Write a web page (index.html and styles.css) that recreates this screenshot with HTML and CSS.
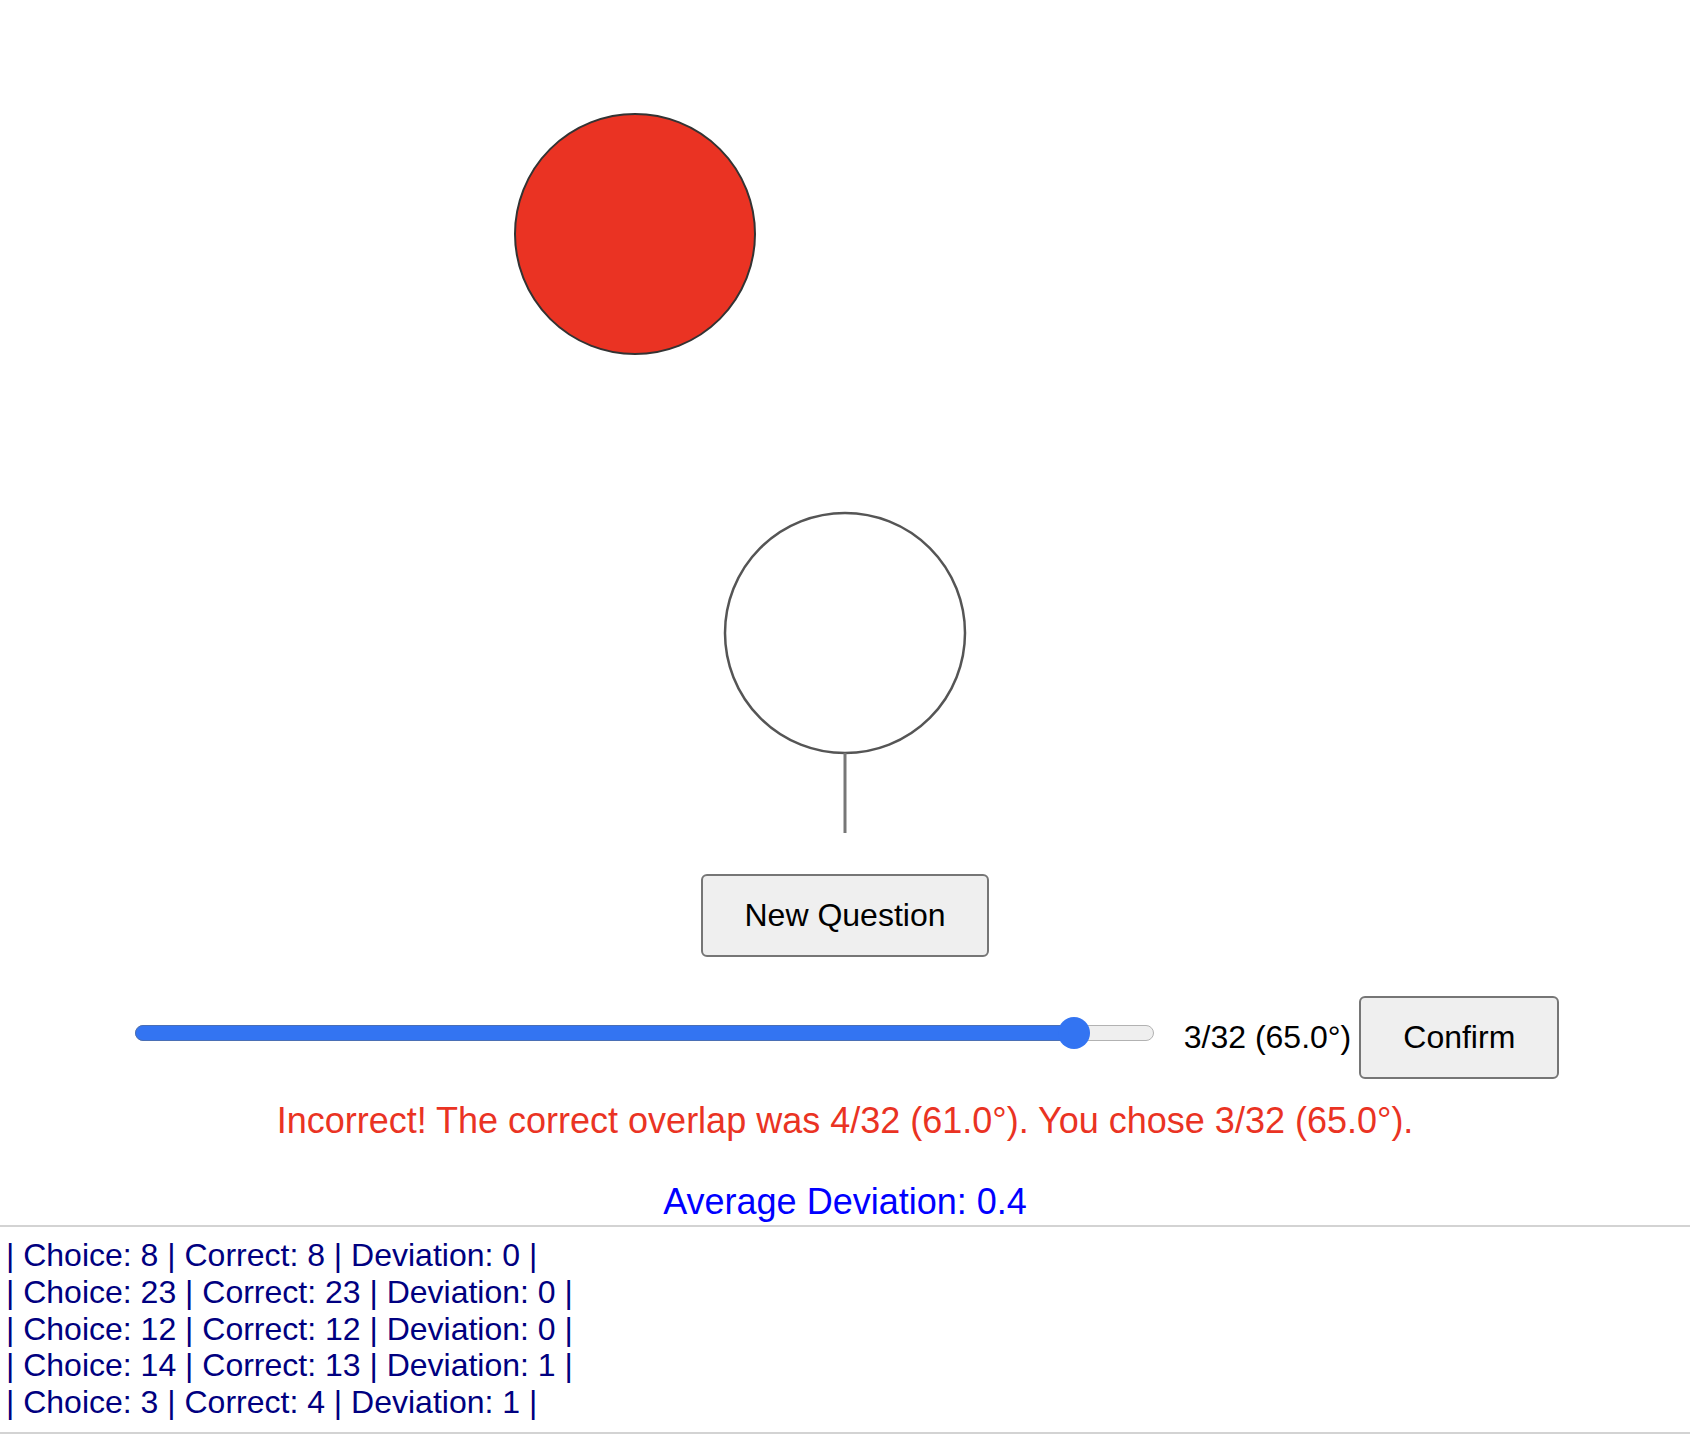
FILE: index.html
```html
<!DOCTYPE html>
<html>
<head>
<meta charset="utf-8">
<link rel="stylesheet" href="styles.css">
</head>
<body>
  <div class="stage">
    <svg class="canvas" width="1690" height="874" viewBox="0 0 1690 874">
      <circle cx="635" cy="234" r="120" fill="#ea3323" stroke="#333333" stroke-width="2"/>
      <circle cx="845" cy="633" r="120" fill="#ffffff" stroke="#555555" stroke-width="2.5"/>
      <line x1="845" y1="753" x2="845" y2="833" stroke="#777777" stroke-width="3"/>
    </svg>
  </div>
  <div class="center-row">
    <button class="btn">New Question</button>
  </div>
  <div class="control-row">
    <div class="slider">
      <div class="track"></div>
      <div class="fill" style="width: 940px;"></div>
      <div class="thumb" style="left: 923px;"></div>
    </div>
    <span class="value">3/32 (65.0°)</span>
    <button class="btn">Confirm</button>
  </div>
  <div class="message">Incorrect! The correct overlap was 4/32 (61.0°). You chose 3/32 (65.0°).</div>
  <div class="average">Average Deviation: 0.4</div>
  <div class="history">
    <div class="entry">| Choice: 8 | Correct: 8 | Deviation: 0 |</div>
    <div class="entry">| Choice: 23 | Correct: 23 | Deviation: 0 |</div>
    <div class="entry">| Choice: 12 | Correct: 12 | Deviation: 0 |</div>
    <div class="entry">| Choice: 14 | Correct: 13 | Deviation: 1 |</div>
    <div class="entry">| Choice: 3 | Correct: 4 | Deviation: 1 |</div>
  </div>
</body>
</html>
```

FILE: styles.css
```css
html, body {
  margin: 0;
  padding: 0;
  background: #ffffff;
}
body {
  font-family: "Liberation Sans", Arial, sans-serif;
  font-size: 32px;
  color: #000000;
  width: 1690px;
}
.stage {
  height: 874px;
}
.canvas {
  display: block;
}
.center-row {
  display: flex;
  justify-content: center;
}
.btn {
  font-family: "Liberation Sans", Arial, sans-serif;
  font-size: 32px;
  line-height: 37px;
  padding: 21px 42px;
  background: #efefef;
  color: #000000;
  border: 2px solid #767676;
  border-radius: 6px;
  margin: 0;
}
.control-row {
  display: flex;
  justify-content: center;
  align-items: center;
  margin-top: 39px;
  padding-left: 4px;
  height: 82px;
}
.slider {
  position: relative;
  width: 1019px;
  height: 32px;
  margin-bottom: 8px;
  margin-right: 30px;
}
.track {
  position: absolute;
  left: 0;
  right: 0;
  top: 8px;
  height: 16px;
  box-sizing: border-box;
  background: #efefef;
  border: 1.5px solid #b2b2b2;
  border-radius: 8px;
}
.fill {
  position: absolute;
  left: 0;
  top: 8px;
  height: 16px;
  box-sizing: border-box;
  background: #3374f2;
  border: 1px solid #4a6fb5;
  border-radius: 8px;
}
.thumb {
  position: absolute;
  top: 0;
  width: 32px;
  height: 32px;
  border-radius: 50%;
  background: #3374f2;
}
.value {
  line-height: 37px;
  margin-right: 8px;
}
.message {
  margin-top: 22px;
  text-align: center;
  font-size: 36px;
  line-height: 41px;
  color: #ea3323;
}
.average {
  margin-top: 40px;
  text-align: center;
  font-size: 36px;
  line-height: 41px;
  color: #0000ff;
}
.history {
  margin-top: 3px;
  border-top: 2px solid #d3d3d3;
  border-bottom: 2px solid #d3d3d3;
  padding: 10px 6px 11px 6px;
  color: #000080;
}
.entry {
  line-height: 36.8px;
}
```
